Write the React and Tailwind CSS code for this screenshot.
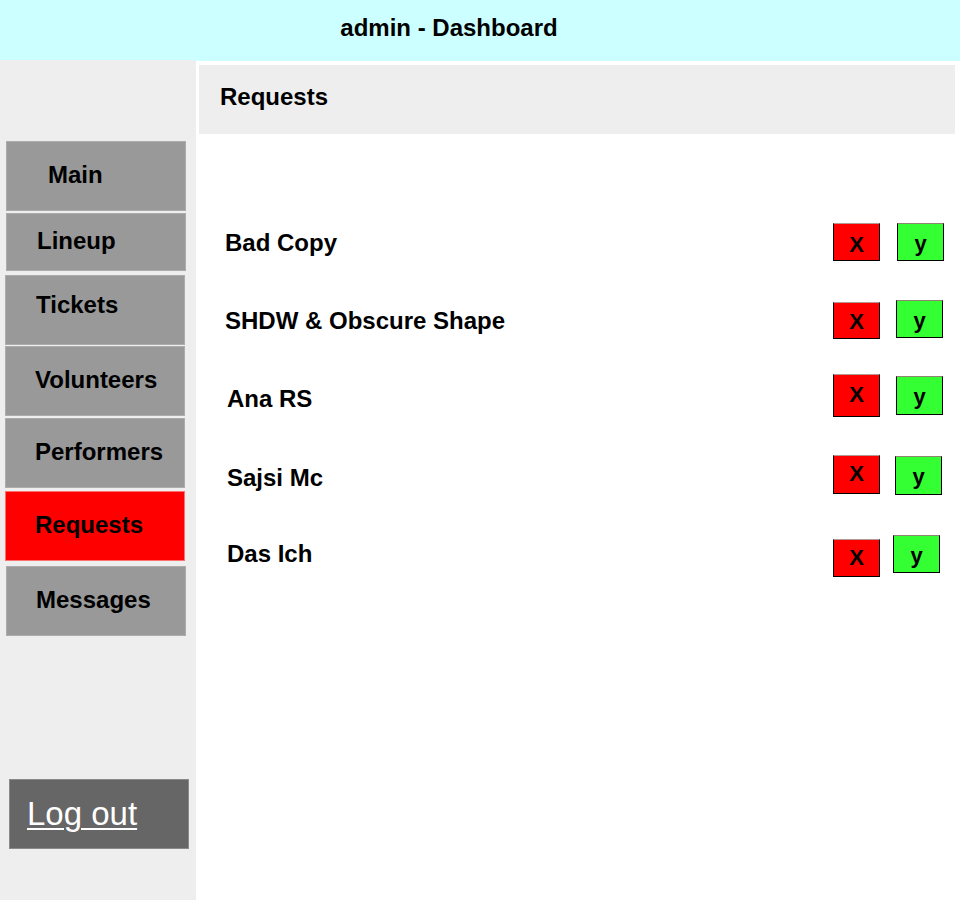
import React from 'react';

const navItems = [
  { label: 'Main', cls: 'mt-[81px] h-[70px] ml-[6px] pl-[41px] pb-[3px]' },
  { label: 'Lineup', cls: 'mt-[2px] h-[58px] ml-[6px] pl-[30px] pb-[3px]' },
  { label: 'Tickets', cls: 'mt-[4px] h-[70px] ml-[5px] pl-[30px] pb-[11px]' },
  { label: 'Volunteers', cls: 'mt-[1px] h-[70px] ml-[5px] pl-[29px] pb-[3px]' },
  { label: 'Performers', cls: 'mt-[2px] h-[70px] ml-[5px] pl-[29px] pb-[3px]' },
  { label: 'Requests', cls: 'mt-[3px] h-[70px] ml-[5px] pl-[29px] pb-[3px]', active: true },
  { label: 'Messages', cls: 'mt-[5px] h-[70px] ml-[6px] pl-[29px] pb-[3px]' },
];

// each row: height, name offset, red/green offsets + sizes, gap between buttons
const requests = [
  { name: 'Bad Copy', h: 'h-[77px]', nameCls: 'mt-[8px] pl-[29px]', red: 'mt-0 h-[38px] pt-[5px]', green: 'mt-0 h-[38px] ml-[17px]' },
  { name: 'SHDW & Obscure Shape', h: 'h-[74px]', nameCls: 'mt-[9px] pl-[29px]', red: 'mt-[2px] h-[37px] pt-[2px]', green: 'mt-0 h-[38px] ml-[16px]' },
  { name: 'Ana RS', h: 'h-[81px]', nameCls: 'mt-[13px] pl-[31px]', red: 'mt-0 h-[43px] pb-[2px]', green: 'mt-[2px] h-[39px] ml-[16px]' },
  { name: 'Sajsi Mc', h: 'h-[80px]', nameCls: 'mt-[11px] pl-[31px]', red: 'mt-0 h-[39px] pb-[1px]', green: 'mt-[1px] h-[39px] ml-[15px]' },
  { name: 'Das Ich', h: 'h-[80px]', nameCls: 'mt-[7px] pl-[31px]', red: 'mt-[4px] h-[38px] pb-[1px]', green: 'mt-0 h-[38px] ml-[13px]' },
];

export default function App() {
  return (
    <div className="w-[960px] h-[900px] flex flex-col bg-white text-black font-['Liberation_Sans',Arial,sans-serif] overflow-hidden">
      {/* top bar */}
      <header className="h-[61px] shrink-0 bg-[#ccffff] flex items-center justify-center pr-[62px] pb-[6px]">
        <h1 className="text-[24px] font-bold">admin - Dashboard</h1>
      </header>

      <div className="flex flex-1">
        {/* sidebar */}
        <aside className="w-[196px] shrink-0 bg-[#eeeeee] flex flex-col -mt-px">
          {navItems.map((item) => (
            <a
              key={item.label}
              href="#"
              className={`w-[180px] flex items-center text-[24px] font-bold border ${item.cls} ${
                item.active ? 'bg-[#ff0000] border-[#ff7070]' : 'bg-[#999999] border-[#acacac]'
              }`}
            >
              {item.label}
            </a>
          ))}

          <a
            href="#"
            className="mt-[143px] ml-[9px] w-[180px] h-[70px] flex items-center pl-[17px] bg-[#666666] border border-[#8a8a8a] text-white text-[33px] underline underline-offset-[3px] decoration-2"
          >
            Log out
          </a>
        </aside>

        {/* main */}
        <main className="flex-1 flex flex-col">
          <div className="mt-[4px] ml-[3px] mr-[5px] h-[69px] bg-[#eeeeee] flex items-center pl-[21px] pb-[6px]">
            <h2 className="text-[24px] font-bold">Requests</h2>
          </div>

          <div className="mt-[89px] flex flex-col">
            {requests.map((r) => (
              <div key={r.name} className={`flex items-start ${r.h}`}>
                <div className={`w-[637px] text-[24px] leading-[24px] font-bold ${r.nameCls}`}>{r.name}</div>
                <button
                  className={`w-[47px] flex items-center justify-center bg-[#ff0000] border border-black border-t-[#b59a94] text-[22px] font-bold leading-none ${r.red}`}
                >
                  X
                </button>
                <button
                  className={`w-[47px] flex items-center justify-center bg-[#33ff33] border border-black border-t-[#8f8470] text-[22px] font-bold leading-none pt-[3px] ${r.green}`}
                >
                  y
                </button>
              </div>
            ))}
          </div>
        </main>
      </div>
    </div>
  );
}
